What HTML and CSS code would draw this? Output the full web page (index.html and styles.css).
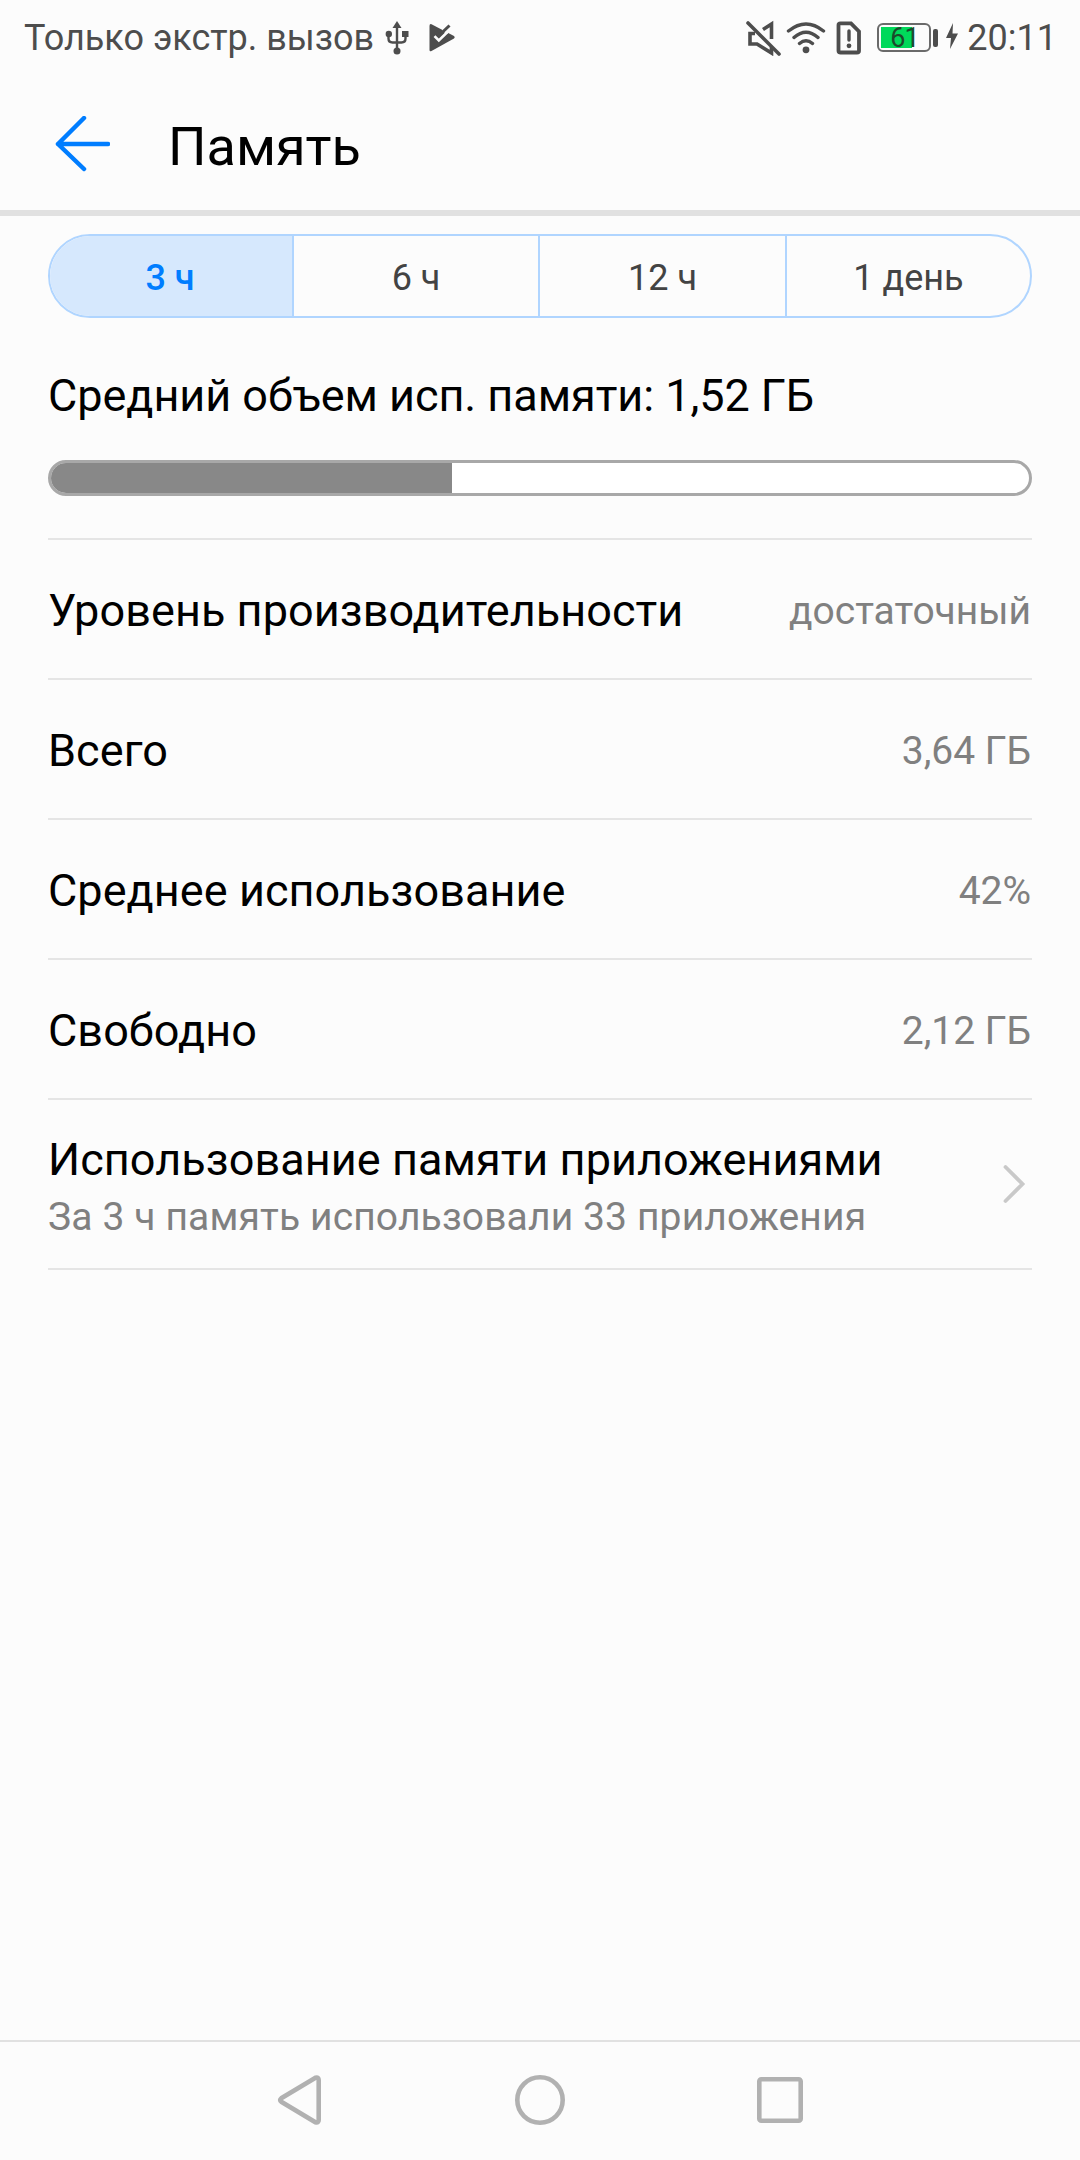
FILE: index.html
```html
<!DOCTYPE html>
<html lang="ru">
<head>
<meta charset="utf-8">
<title>Память</title>
<link rel="stylesheet" href="styles.css">
</head>
<body>
<div class="screen">
  <div class="status">
    <span class="carrier">Только экстр. вызов</span>
    <svg class="usb" width="24" height="36" viewBox="0 0 24 36"><g fill="none" stroke="#4d4d4d" stroke-width="2.4"><path d="M12 6V30M3.500 14v4.500q0 4 4 4h9q4 0 4-4V14"/></g><g fill="#4d4d4d"><path d="M12 1L16.500 8H7.500Z"/><circle cx="12" cy="31" r="3.500"/><circle cx="3.800" cy="14" r="3.200"/><path d="M17 11h6.500v6H17Z"/></g></svg>
    <svg class="play" width="28" height="30" viewBox="0 0 28 30"><path d="M3.500 1.200L26 13Q27.500 14.200 26 15.400L3.500 28Q1.500 28.800 1.500 27V3Q1.500 0.500 3.500 1.200Z" fill="#4d4d4d"/><path d="M14 8L20.500 1.500L24.500 5L19 11Z" fill="#fcfcfc"/><path d="M6.500 13.200L10.800 17.500L20.500 8" fill="none" stroke="#fcfcfc" stroke-width="2.600"/><path d="M7.500 9L11 12.500L21.500 2.500" fill="none" stroke="#4d4d4d" stroke-width="3"/></svg>
    <span class="spacer"></span>
    <svg class="mute" width="36" height="36" viewBox="0 0 36 36"><g fill="none" stroke="#4d4d4d" stroke-width="3.600"><path d="M3 3L34 34" stroke-linecap="round"/><path d="M18 9.500L26.500 4V19M10 13.500H5V24H12L26.500 33V27"/></g></svg>
    <svg class="wifi" width="40" height="36" viewBox="0 0 40 36"><g fill="none" stroke="#4d4d4d" stroke-width="3.400" stroke-linecap="round"><path d="M2.500 11Q20-3 37.500 11M8 17.500Q20 7 32 17.500M13.500 23.500Q20 18 26.500 23.500"/></g><circle cx="20" cy="29.800" r="3.400" fill="#4d4d4d"/></svg>
    <svg class="sim" width="26" height="36" viewBox="0 0 26 36"><path d="M4.500 3.300H15L23 11.500V31Q23 32.500 21 32.500H4.500Q2.500 32.500 2.500 31V5Q2.500 3.300 4.500 3.300Z" fill="none" stroke="#4d4d4d" stroke-width="3.800"/><path d="M13 11V20" stroke="#4d4d4d" stroke-width="3.400" stroke-linecap="round"/><circle cx="13" cy="25.800" r="2.400" fill="#4d4d4d"/></svg>
    <span class="battery"><span class="level">61</span></span>
    <span class="tip"></span>
    <svg class="bolt" width="14" height="28" viewBox="0 0 14 28"><path d="M8 1L1 16H6L5 27L13 11.500H7.500Z" fill="#4d4d4d"/></svg>
    <span class="clock">20:11</span>
  </div>
  <header class="header">
    <svg class="back" width="56" height="56" viewBox="0 0 56 56"><path d="M29 3L3 29L29 54M3 29H53" transform="translate(1 -1)" fill="none" stroke="#007dff" stroke-width="4.500" stroke-linecap="round" stroke-linejoin="round"/></svg>
    <h1 class="title">Память</h1>
  </header>
  <main class="main">
    <div class="tabs">
      <div class="tab active">3 ч</div>
      <div class="tab">6 ч</div>
      <div class="tab">12 ч</div>
      <div class="tab">1 день</div>
    </div>
    <div class="summary">Средний объем исп. памяти: 1,52 ГБ</div>
    <div class="progress"><div class="used" style="width:41%"></div></div>
    <div class="list">
      <div class="row"><span>Уровень производительности</span><span class="value">достаточный</span></div>
      <div class="row"><span>Всего</span><span class="value">3,64 ГБ</span></div>
      <div class="row"><span>Среднее использование</span><span class="value">42%</span></div>
      <div class="row"><span>Свободно</span><span class="value">2,12 ГБ</span></div>
      <div class="row apps">
        <div class="texts"><span>Использование памяти приложениями</span><span class="sub">За 3 ч память использовали 33 приложения</span></div>
        <svg class="chevron" width="24" height="40" viewBox="0 0 24 40"><path d="M3.500 3L20.500 20L3.500 37" fill="none" stroke="#c9c9c9" stroke-width="3.800" stroke-linecap="round"/></svg>
      </div>
    </div>
  </main>
  <nav class="nav">
    <svg width="52" height="52" viewBox="0 0 52 52"><path d="M41.500 3.700L7.300 24.200Q5 26 7.300 27.800L41.500 48.300Q44.700 49.300 44.700 46V6Q44.700 2.700 41.500 3.700Z"/></svg>
    <svg width="52" height="52" viewBox="0 0 52 52"><circle cx="26" cy="26" r="22.700"/></svg>
    <svg width="52" height="52" viewBox="0 0 52 52"><rect x="5.300" y="5.300" width="41.400" height="41.400" rx="2"/></svg>
  </nav>
</div>
</body>
</html>
```
FILE: styles.css
```css
* { box-sizing: border-box; }
body { margin: 0; background: #fcfcfc; font-family: Roboto, sans-serif; color: #000; }
.screen { width: 1080px; height: 2160px; display: flex; flex-direction: column; }
.status { height: 72px; padding: 3px 23px 0 24px; display: flex; align-items: center; color: #4d4d4d; font-size: 36px; line-height: 42px; white-space: nowrap; }
.usb { margin-left: 11px; }
.play { margin-left: 19px; }
.spacer { flex: 1; }
.wifi { margin-left: 5px; }
.sim { margin-left: 10px; }
.battery { width: 54px; height: 29px; margin-left: 15px; padding: 2px; border: 2px solid #6a6a6a; border-radius: 6px; }
.level { display: block; width: 31px; height: 21px; padding-left: 9px; background: #00d95a; color: #1c4a2b; font-size: 27px; line-height: 22px; letter-spacing: -1px; }
.tip { width: 5px; height: 18px; margin-left: 2px; border-radius: 2px; background: #4d4d4d; }
.bolt { margin: 0 8px 4px 7px; }
.header { height: 144px; padding: 5px 0 0 54px; border-bottom: 6px solid #e1e1e1; display: flex; align-items: center; gap: 58px; }
.title { margin: 0; font-size: 54px; line-height: 64px; font-weight: 400; padding-top: 6px; }
.main { flex: 1; padding: 18px 48px 0; }
.tabs { height: 84px; border: 2px solid #b0d5ff; border-radius: 42px; display: grid; grid-template-columns: 242px 246px 247px 1fr; overflow: hidden; }
.tab { display: flex; align-items: center; justify-content: center; font-size: 36px; color: #434343; padding-top: 3px; }
.tab + .tab { border-left: 2px solid #b0d5ff; }
.active { padding-right: 2px; background: #d6e8fd; color: #007dff; font-weight: 500; }
.summary { margin-top: 51px; font-size: 45px; line-height: 54px; letter-spacing: -0.04px; }
.progress { margin-top: 37px; height: 36px; border: 3px solid #a8a8a8; border-radius: 18px; background: #fff; overflow: hidden; }
.used { height: 100%; background: #888; }
.list { margin-top: 42px; border-top: 2px solid #e5e5e5; }
.row { height: 140px; padding: 4px 1px 0 0; border-bottom: 2px solid #e5e5e5; display: flex; align-items: center; justify-content: space-between; font-size: 45px; line-height: 54px; letter-spacing: 0.06px; }
.value, .sub { color: #808080; font-size: 39px; }
.value { letter-spacing: -0.03px; }
.sub { letter-spacing: 0.13px; }
.apps { height: 170px; padding-top: 0; }
.texts { display: flex; flex-direction: column; gap: 3px; padding-top: 9px; }
.chevron { margin-right: 5px; }
.nav { height: 120px; padding-bottom: 2px; border-top: 2px solid #e1e1e1; display: flex; justify-content: center; align-items: center; gap: 188px; }
.nav svg { fill: none; stroke: #b1b1b1; stroke-width: 4.6; }
```
